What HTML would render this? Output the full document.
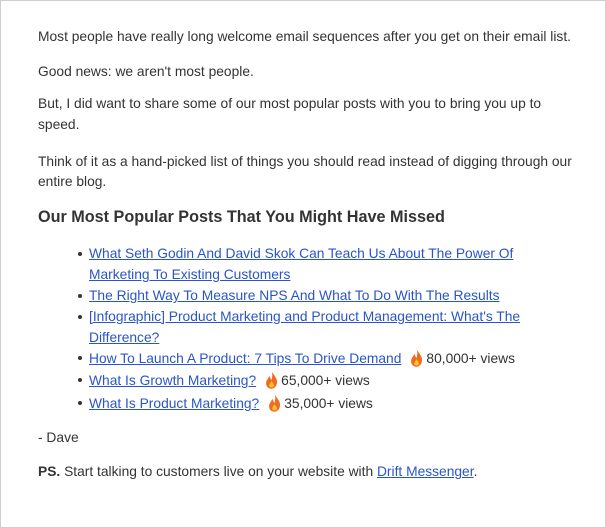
<!DOCTYPE html>
<html><head><meta charset="utf-8"><style>
html,body{margin:0;padding:0;background:#fff;}
body{width:606px;height:528px;position:relative;overflow:hidden;font-family:"Liberation Sans",Arial,sans-serif;font-size:13.8px;color:#333;}
.frame{position:absolute;left:0;top:0;width:604px;height:526px;border:1px solid #cfcfcf;}
.l{position:absolute;left:38px;line-height:20px;white-space:nowrap;}
.li{left:89px;}
.b{position:absolute;left:78px;width:4px;height:4px;border-radius:2px;background:#333;margin-top:-2px;}
a{color:#2a55c8;text-decoration:underline;}
h{font-weight:bold;font-size:16.2px;color:#333;}
svg{vertical-align:-4px;margin:0 3px 0 9px;}
</style></head><body>
<div class="frame"></div>
<div class="l" style="top:27px">Most people have really long welcome email sequences after you get on their email list.</div>
<div class="l" style="top:62px">Good news: we aren't most people.</div>
<div class="l" style="top:94px">But, I did want to share some of our most popular posts with you to bring you up to</div>
<div class="l" style="top:115px">speed.</div>
<div class="l" style="top:152px">Think of it as a hand-picked list of things you should read instead of digging through our</div>
<div class="l" style="top:172px">entire blog.</div>
<div class="l" style="top:207px"><h>Our Most Popular Posts That You Might Have Missed</h></div>

<div class="b" style="top:254px"></div>
<div class="l li" style="top:244px"><a>What Seth Godin And David Skok Can Teach Us About The Power Of</a></div>
<div class="l li" style="top:265px"><a>Marketing To Existing Customers</a></div>
<div class="b" style="top:296px"></div>
<div class="l li" style="top:286px"><a>The Right Way To Measure NPS And What To Do With The Results</a></div>
<div class="b" style="top:317px"></div>
<div class="l li" style="top:307px"><a>[Infographic] Product Marketing and Product Management: What's The</a></div>
<div class="l li" style="top:328px"><a>Difference? </a></div>
<div class="b" style="top:358px"></div>
<div class="l li" style="top:348px"><a>How To Launch A Product: 7 Tips To Drive Demand</a><svg width="13" height="19" viewBox="0 0 12 17"><path d="M6 0C7 4 12 7 11 12C10.5 15 8.5 17 6 17C3 17 1 15 1 12C1 9 3 8 4 5C5 7 5 8 6 9C7 6 7 3 6 0Z" fill="#f26a1b"/><path d="M6 10C7 12 9 13 8 15C7.5 16 4.5 16 4 15C3.5 13 5 12 6 10Z" fill="#fcc23a"/></svg>80,000+ views</div>
<div class="b" style="top:380px"></div>
<div class="l li" style="top:370px"><a>What Is Growth Marketing?</a><svg width="13" height="19" viewBox="0 0 12 17"><path d="M6 0C7 4 12 7 11 12C10.5 15 8.5 17 6 17C3 17 1 15 1 12C1 9 3 8 4 5C5 7 5 8 6 9C7 6 7 3 6 0Z" fill="#f26a1b"/><path d="M6 10C7 12 9 13 8 15C7.5 16 4.5 16 4 15C3.5 13 5 12 6 10Z" fill="#fcc23a"/></svg>65,000+ views</div>
<div class="b" style="top:403px"></div>
<div class="l li" style="top:393px"><a>What Is Product Marketing?</a><svg width="13" height="19" viewBox="0 0 12 17"><path d="M6 0C7 4 12 7 11 12C10.5 15 8.5 17 6 17C3 17 1 15 1 12C1 9 3 8 4 5C5 7 5 8 6 9C7 6 7 3 6 0Z" fill="#f26a1b"/><path d="M6 10C7 12 9 13 8 15C7.5 16 4.5 16 4 15C3.5 13 5 12 6 10Z" fill="#fcc23a"/></svg>35,000+ views</div>

<div class="l" style="top:428px">- Dave</div>
<div class="l" style="top:462px"><b>PS.</b> Start talking to customers live on your website with <a>Drift Messenger</a>.</div>
</body></html>
